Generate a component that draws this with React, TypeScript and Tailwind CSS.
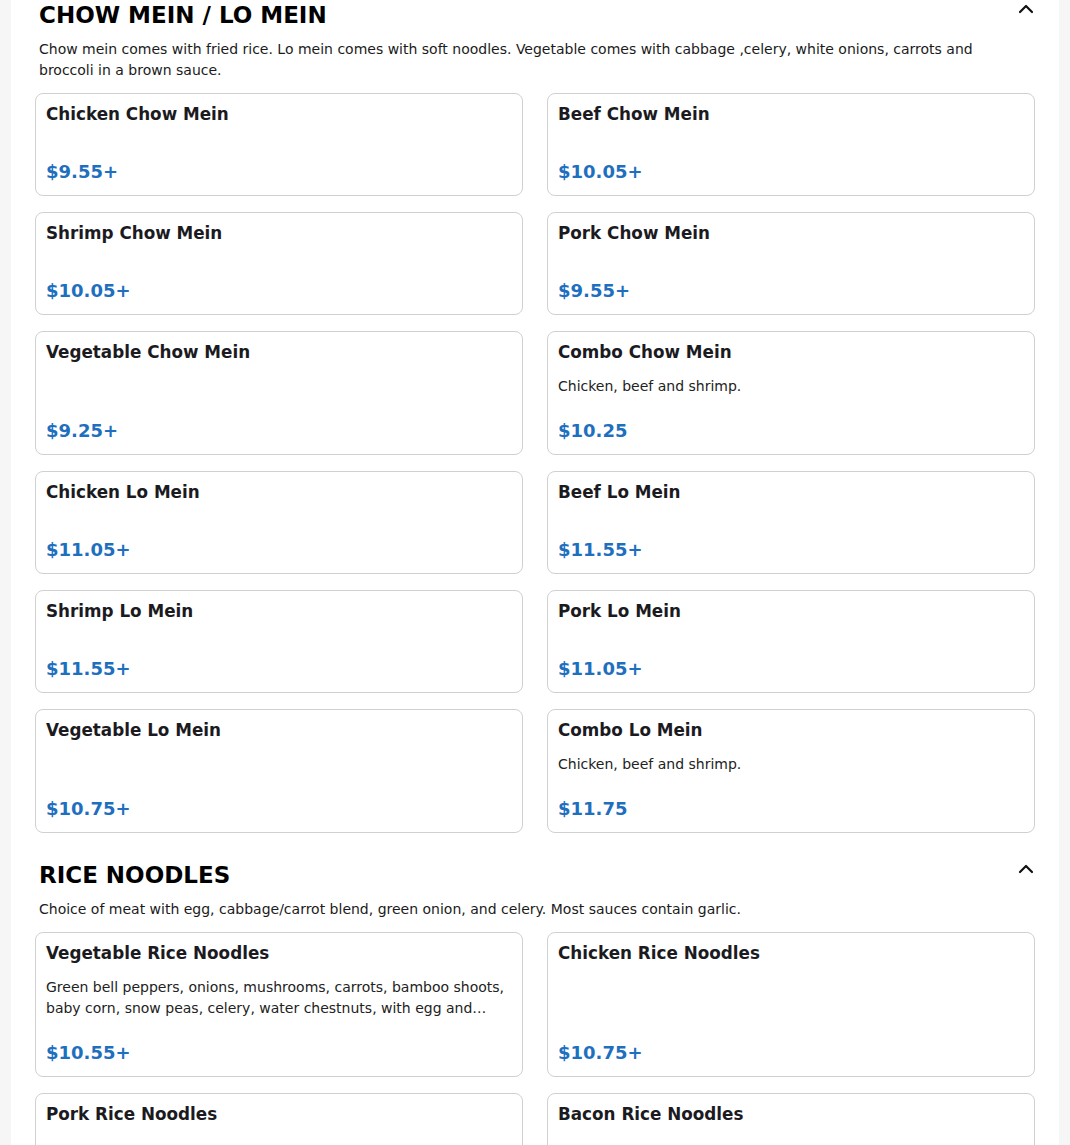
import { ChevronUp } from "lucide-react";

type Item = { name: string; price: string; desc?: string };

const chowMein: Item[] = [
  { name: "Chicken Chow Mein", price: "$9.55+" },
  { name: "Beef Chow Mein", price: "$10.05+" },
  { name: "Shrimp Chow Mein", price: "$10.05+" },
  { name: "Pork Chow Mein", price: "$9.55+" },
  { name: "Vegetable Chow Mein", price: "$9.25+" },
  { name: "Combo Chow Mein", price: "$10.25", desc: "Chicken, beef and shrimp." },
  { name: "Chicken Lo Mein", price: "$11.05+" },
  { name: "Beef Lo Mein", price: "$11.55+" },
  { name: "Shrimp Lo Mein", price: "$11.55+" },
  { name: "Pork Lo Mein", price: "$11.05+" },
  { name: "Vegetable Lo Mein", price: "$10.75+" },
  { name: "Combo Lo Mein", price: "$11.75", desc: "Chicken, beef and shrimp." },
];

const riceNoodles: Item[] = [
  {
    name: "Vegetable Rice Noodles",
    price: "$10.55+",
    desc: "Green bell peppers, onions, mushrooms, carrots, bamboo shoots, baby corn, snow peas, celery, water chestnuts, with egg and broccoli in a light sauce.",
  },
  { name: "Chicken Rice Noodles", price: "$10.75+" },
  { name: "Pork Rice Noodles", price: "$10.75+" },
  { name: "Bacon Rice Noodles", price: "$10.75+" },
];

function Card({ item }: { item: Item }) {
  return (
    <div className="flex flex-col rounded-lg border border-[#d0d0d0] bg-white px-[10px] pt-[8px] pb-[10px]">
      <h3 className="text-[16.8px] font-bold leading-[24px] text-[#1b1b1f]">{item.name}</h3>
      <div className="mt-[12px] flex-1">
        {item.desc && (
          <p className="line-clamp-2 text-[14px] leading-[21px] text-[#222]">{item.desc}</p>
        )}
      </div>
      <div className="mt-[20px] text-[18px] font-bold leading-[27px] text-[#1f6fbf]">{item.price}</div>
    </div>
  );
}

function Section({ title, desc, items }: { title: string; desc: string; items: Item[] }) {
  return (
    <section>
      <div className="flex items-start justify-between">
        <h2 className="mt-[3px] px-1 text-[23px] font-bold leading-[32px] text-black">{title}</h2>
        <ChevronUp className="mt-[1px] mr-[-3px] h-6 w-6 text-[#111]" strokeWidth={2.2} />
      </div>
      <p className="mt-[8px] px-1 text-[14px] leading-[21px] text-[#1b1b1b]">{desc}</p>
      <div className="mt-[12px] grid grid-cols-2 gap-x-6 gap-y-4">
        {items.map((it) => (
          <Card key={it.name} item={it} />
        ))}
      </div>
    </section>
  );
}

export default function App() {
  return (
    <div
      className="min-h-screen bg-[#f6f6f6] px-[11px]"
      style={{ fontFamily: '"DejaVu Sans", Verdana, sans-serif' }}
    >
      <div className="-mt-[4px] flex flex-col gap-[23px] bg-white px-6 pb-10">
        <Section
          title="CHOW MEIN / LO MEIN"
          desc="Chow mein comes with fried rice. Lo mein comes with soft noodles. Vegetable comes with cabbage ,celery, white onions, carrots and broccoli in a brown sauce."
          items={chowMein}
        />
        <Section
          title="RICE NOODLES"
          desc="Choice of meat with egg, cabbage/carrot blend, green onion, and celery. Most sauces contain garlic."
          items={riceNoodles}
        />
      </div>
    </div>
  );
}
